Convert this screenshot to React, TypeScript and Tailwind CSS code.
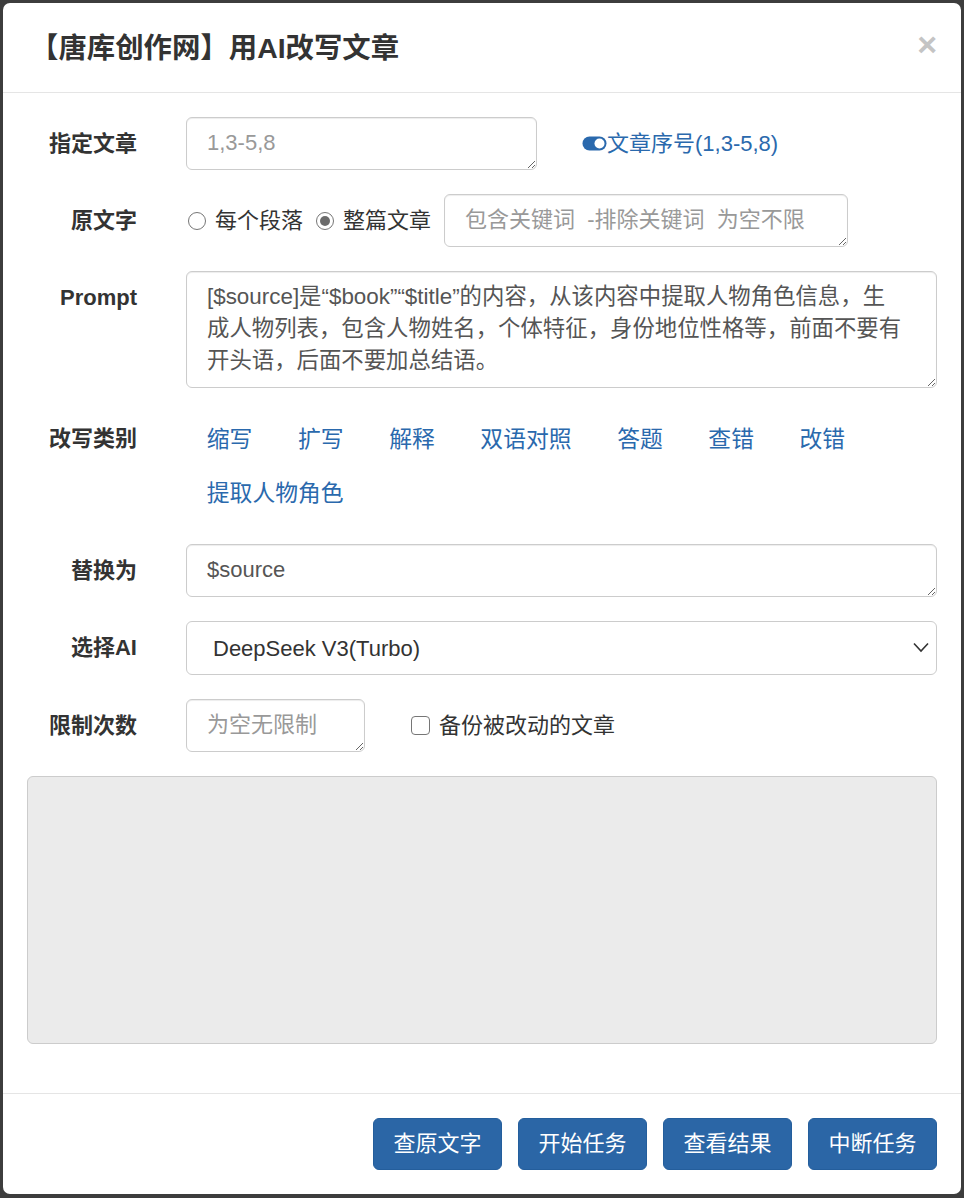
import type { ReactNode } from "react";

const font = { fontFamily: '"Liberation Sans", "Noto Sans CJK SC", sans-serif' };

const fieldClassName =
  "block h-[53px] resize rounded-[6px] border border-[#cccccc] bg-white py-[9px] pl-[20px] leading-[32px] text-[#555555] shadow-[inset_0_1px_1px_rgba(0,0,0,0.075)] outline-none placeholder:text-[#999999]";

const rewriteTypes = ["缩写", "扩写", "解释", "双语对照", "答题", "查错", "改错", "提取人物角色"];

const footerButtons = ["查原文字", "开始任务", "查看结果", "中断任务"];

function Row({ label, top, children }: { label: string; top?: boolean; children: ReactNode }) {
  return (
    <div className={`mb-[24px] flex ${top ? "items-start" : "items-center"}`}>
      <label
        className={`w-[110px] shrink-0 text-right text-[22px] font-bold leading-[32px] text-[#333333] ${top ? "pt-[11px]" : ""}`}
      >
        {label}
      </label>
      <div className="ml-[49px] flex min-w-0 flex-1 items-center">{children}</div>
    </div>
  );
}

function Radio({ checked, label }: { checked?: boolean; label: string }) {
  return (
    <span className="flex items-center gap-[9px] text-[22px] leading-[32px] text-[#333333]">
      <span className="flex h-[18px] w-[18px] items-center justify-center rounded-full border border-[#767676] bg-white">
        {checked && <span className="h-[10px] w-[10px] rounded-full bg-[#6b6b6b]" />}
      </span>
      {label}
    </span>
  );
}

function ToggleOn() {
  return (
    <svg width="25" height="15" viewBox="0 0 25 15" aria-hidden="true">
      <rect x="0.5" y="0.5" width="24" height="14" rx="7" fill="#2a69ad" />
      <circle cx="17.5" cy="7.5" r="5" fill="#ffffff" />
    </svg>
  );
}

export default function App() {
  return (
    <div className="min-h-[1198px] bg-[#3d3d3d] p-[3px]" style={font}>
      <div className="flex min-h-[1191px] flex-col rounded-[7px] bg-white">
        {/* header */}
        <div className="flex items-start justify-between border-b border-[#e5e5e5] pb-[23px] pl-[27px] pr-[24px] pt-[25px]">
          <h4 className="text-[28.4px] font-bold leading-[41px] text-[#333333]">【唐库创作网】用AI改写文章</h4>
          <button className="h-[32px] text-[34px] font-bold leading-[32px] text-[#c4c4c4]">×</button>
        </div>

        {/* body */}
        <div className="flex-1 px-[24px] pb-[47px] pt-[24px]">
          <Row label="指定文章">
            <textarea className={`${fieldClassName} w-[351px] pr-[20px] text-[22px]`} placeholder="1,3-5,8" rows={1} />
            <a className="ml-[45px] flex items-center text-[22px] leading-[32px] text-[#2a69ad]">
              <ToggleOn />
              文章序号(1,3-5,8)
            </a>
          </Row>

          <Row label="原文字">
            <div className="ml-[2px] flex items-center gap-[13px]">
              <Radio label="每个段落" />
              <Radio checked label="整篇文章" />
            </div>
            <textarea
              className={`${fieldClassName} ml-[13px] w-[404px] pr-[20px] text-[22px]`}
              placeholder="包含关键词  -排除关键词  为空不限"
              rows={1}
            />
          </Row>

          <Row label="Prompt" top>
            <textarea
              className={`${fieldClassName} h-[117px] w-full pr-[32px] text-[22.4px]`}
              defaultValue="[$source]是“$book”“$title”的内容，从该内容中提取人物角色信息，生成人物列表，包含人物姓名，个体特征，身份地位性格等，前面不要有开头语，后面不要加总结语。"
            />
          </Row>

          <div className="mb-[24px] flex items-start">
            <label className="w-[110px] shrink-0 pt-[11px] text-right text-[22px] font-bold leading-[32px] text-[#333333]">
              改写类别
            </label>
            <ul className="ml-[47px] flex flex-1 flex-wrap">
              {rewriteTypes.map((t) => (
                <li key={t}>
                  <a className="block px-[22.8px] py-[11px] text-[22.8px] leading-[32px] text-[#2a69ad]">{t}</a>
                </li>
              ))}
            </ul>
          </div>

          <Row label="替换为">
            <textarea
              className={`${fieldClassName} w-full pr-[20px] text-[22px] text-[#333333]`}
              defaultValue="$source"
              rows={1}
            />
          </Row>

          <Row label="选择AI">
            <div className="relative w-full">
              <select className="block h-[54px] w-full appearance-none rounded-[6px] border border-[#cccccc] bg-white pl-[26px] text-[22px] text-[#333333] outline-none">
                <option>DeepSeek V3(Turbo)</option>
              </select>
              <svg
                className="pointer-events-none absolute right-[8px] top-[21px]"
                width="16"
                height="11"
                viewBox="0 0 16 11"
                aria-hidden="true"
              >
                <path d="M1 1.5 L8 9 L15 1.5" fill="none" stroke="#333333" strokeWidth="1.6" />
              </svg>
            </div>
          </Row>

          <Row label="限制次数">
            <textarea className={`${fieldClassName} w-[179px] pr-[20px] text-[22px]`} placeholder="为空无限制" rows={1} />
            <span className="ml-[46px] flex items-center gap-[9px] text-[22px] leading-[32px] text-[#333333]">
              <span className="h-[19px] w-[19px] rounded-[4px] border-[1.5px] border-[#767676] bg-white" />
              备份被改动的文章
            </span>
          </Row>

          <div className="h-[268px] rounded-[6px] border border-[#cccccc] bg-[#ebebeb]" />
        </div>

        {/* footer */}
        <div className="flex justify-end gap-[16px] border-t border-[#e5e5e5] px-[24px] pb-[24px] pt-[24px]">
          {footerButtons.map((b) => (
            <button
              key={b}
              className="h-[52px] rounded-[6px] border border-[#245e9c] bg-[#2b66a6] px-[19.5px] text-[22px] leading-[32px] text-white"
            >
              {b}
            </button>
          ))}
        </div>
      </div>
    </div>
  );
}
